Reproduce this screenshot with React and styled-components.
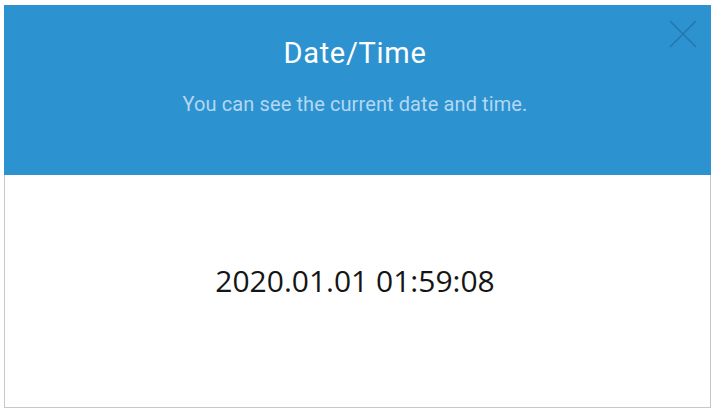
import React from "react";
import styled, { createGlobalStyle } from "styled-components";

const Global = createGlobalStyle`
  html, body { margin: 0; padding: 0; background: #ffffff; }
  body { width: 722px; height: 418px; overflow: hidden; }
`;

const Page = styled.div`
  padding: 5px 11px 10px 4px;
  box-sizing: border-box;
  width: 722px;
  height: 418px;
`;

const Dialog = styled.div`
  position: relative;
  display: flex;
  flex-direction: column;
  height: 403px;
  border: 1px solid #c8c8c8;
  border-top: none;
  box-sizing: border-box;
  background: #fff;
`;

const Header = styled.header`
  background: #2d92d0;
  height: 170px;
  margin: 0 -1px;
  padding-right: 5px;
  display: flex;
  flex-direction: column;
  align-items: center;
  font-family: Roboto, "Liberation Sans", sans-serif;
`;

const Title = styled.h1`
  margin: 31px 0 0;
  font-weight: 400;
  font-size: 29px;
  line-height: 34px;
  color: #ffffff;
  letter-spacing: 0.7px;
`;

const Subtitle = styled.p`
  margin: 22px 0 0;
  font-size: 20px;
  line-height: 24px;
  color: #b3d8f2;
  letter-spacing: 0.1px;
`;

const Close = styled.button`
  position: absolute;
  top: 15px;
  right: 13px;
  width: 28px;
  height: 28px;
  padding: 0;
  border: none;
  background: transparent;
  cursor: pointer;
`;

const Body = styled.main`
  flex: 1;
  display: flex;
  align-items: center;
  justify-content: center;
  padding: 0 5px 22px 0;
`;

const Clock = styled.div`
  font-family: "Open Sans", "Noto Sans", sans-serif;
  font-size: 30px;
  color: #151515;
  letter-spacing: 0;
`;

export default function App() {
  return (
    <>
      <Global />
      <Page>
        <Dialog>
          <Header>
            <Title>Date/Time</Title>
            <Subtitle>You can see the current date and time.</Subtitle>
          </Header>
          <Close aria-label="Close">
            <svg width="28" height="28" viewBox="0 0 28 28">
              <path d="M1 1 L27 27 M27 1 L1 27" stroke="#2676b0" strokeWidth="1.6" fill="none" />
            </svg>
          </Close>
          <Body>
            <Clock>2020.01.01 01:59:08</Clock>
          </Body>
        </Dialog>
      </Page>
    </>
  );
}
